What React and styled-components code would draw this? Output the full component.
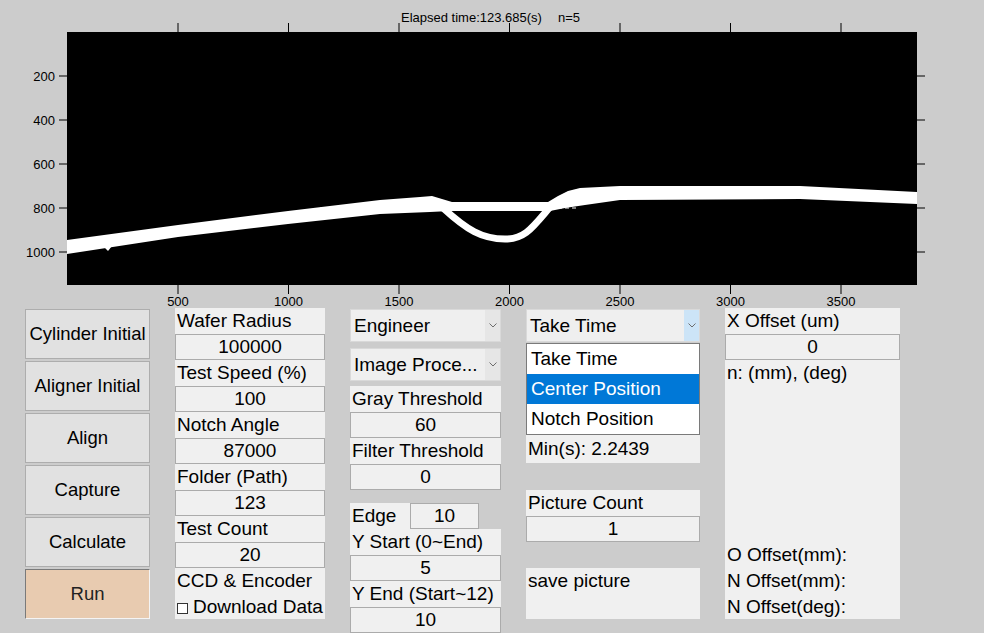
import React from 'react';
import styled, { createGlobalStyle } from 'styled-components';

const GlobalStyle = createGlobalStyle`
  html, body {
    margin: 0;
    padding: 0;
    background: #cccccc;
  }
`;

const Window = styled.div`
  width: 984px;
  height: 633px;
  background: #cccccc;
  overflow: hidden;
  display: flex;
  flex-direction: column;
  font-family: "Liberation Sans", Arial, sans-serif;
  color: #000;
`;

const PlotArea = styled.div`
  flex: none;
  height: 308px;
  overflow: hidden;

  svg {
    display: block;
  }
`;

const Controls = styled.div`
  display: flex;
  align-items: flex-start;
  gap: 25px;
  padding-left: 25px;
  height: 325px;
`;

const Column = styled.div`
  position: relative;
  display: flex;
  flex-direction: column;
  flex: none;
  width: ${p => p.$w}px;
  margin-top: ${p => p.$top || 0}px;
`;

const Button = styled.div`
  height: 50px;
  box-sizing: border-box;
  margin-bottom: 2px;
  display: flex;
  align-items: center;
  justify-content: center;
  font-size: 18.5px;
  white-space: nowrap;
  background: ${p => (p.$active ? '#e8cbb0' : '#e1e1e1')};
  border: 1px solid;
  border-color: ${p => (p.$active ? '#7a7a7a #f4f4f4 #f4f4f4 #7a7a7a' : '#adadad')};
  color: ${p => (p.$active ? '#222' : '#000')};
`;

const Label = styled.div`
  height: ${p => p.$h || 26}px;
  line-height: ${p => p.$h || 26}px;
  background: #f0f0f0;
  padding-left: 2px;
  font-size: 19px;
  white-space: nowrap;
  overflow: hidden;
  flex: none;
`;

const Edit = styled.div`
  height: 26px;
  width: ${p => (p.$w ? `${p.$w}px` : 'auto')};
  box-sizing: border-box;
  border: 1px solid #ababab;
  background: #f0f0f0;
  text-align: center;
  font-size: 19px;
  line-height: 24px;
  flex: none;
`;

const Gap = styled.div`
  flex: none;
  height: ${p => p.$h}px;
`;

const Select = styled.div`
  height: 33px;
  box-sizing: border-box;
  display: flex;
  border: 1px solid #d9d9d9;
  background: #efefef;
  flex: none;
`;

const SelectText = styled.div`
  flex: 1;
  padding-left: 3px;
  line-height: 31px;
  font-size: 19px;
  white-space: nowrap;
  overflow: hidden;
`;

const SelectArrow = styled.div`
  width: 15px;
  display: flex;
  align-items: center;
  justify-content: center;
  background: ${p => (p.$open ? '#cce4f7' : '#e6e6e6')};
`;

const Menu = styled.div`
  position: absolute;
  top: 34px;
  left: 0;
  width: 100%;
  box-sizing: border-box;
  border: 1px solid #7a7a7a;
  background: #fff;
  z-index: 2;
`;

const MenuItem = styled.div`
  height: 30px;
  line-height: 30px;
  padding-left: 4px;
  font-size: 19px;
  white-space: nowrap;
  background: ${p => (p.$selected ? '#0078d7' : 'transparent')};
  color: ${p => (p.$selected ? '#fff' : '#000')};
`;

const EdgeRow = styled.div`
  display: flex;
  height: 26px;
  flex: none;
`;

const EdgeLabel = styled(Label)`
  width: 58px;
`;

const CheckRow = styled.div`
  display: flex;
  align-items: center;
  height: 25px;
  background: #f0f0f0;
  padding-left: 2px;
  font-size: 19px;
  white-space: nowrap;
`;

const CheckBox = styled.span`
  width: 11px;
  height: 11px;
  box-sizing: border-box;
  border: 1px solid #333;
  background: #fff;
  margin: 4px 5px 0 0;
  flex: none;
`;

const NoteBox = styled.div`
  height: 51px;
  background: #f0f0f0;
  padding-left: 2px;
  font-size: 19px;
  line-height: 26px;
`;

const ResultPanel = styled.div`
  height: 311px;
  background: #f0f0f0;
  display: flex;
  flex-direction: column;

  ${Label} {
    background: transparent;
  }
`;

const Spacer = styled.div`
  flex: 1;
`;

const X_TICKS = [500, 1000, 1500, 2000, 2500, 3000, 3500];
const Y_TICKS = [200, 400, 600, 800, 1000];
const px = v => 67.5 + v * 0.221;
const py = v => 32 + v * 0.22;

const bandTop = [
  [67, 240], [178, 225], [288, 211], [380, 200], [420, 197], [432, 196], [442, 199], [452, 202],
  [548, 202], [558, 196], [568, 191], [580, 188], [620, 186], [800, 186], [917, 192],
];
const bandBottom = [
  [917, 204], [800, 199], [620, 200], [585, 205], [565, 208], [550, 211], [450, 211],
  [430, 212], [380, 214], [288, 224], [178, 237], [67, 254],
];

const Chevron = () => (
  <svg width="8" height="5" viewBox="0 0 8 5">
    <polyline points="0.5,0.5 4,4 7.5,0.5" fill="none" stroke="#6d6d6d" strokeWidth="1" />
  </svg>
);

const Plot = () => (
  <PlotArea>
    <svg width="984" height="308" viewBox="0 0 984 308" fontFamily='"Liberation Sans", Arial, sans-serif'>
      <text x="401" y="22" fontSize="13" fill="#000">Elapsed time:123.685(s)</text>
      <text x="558" y="22" fontSize="13" fill="#000">n=5</text>
      <rect x="67" y="32" width="850" height="253" fill="#000" />
      <polygon points={[...bandTop, ...bandBottom].map(p => p.join(',')).join(' ')} fill="#fff" />
      <polygon points="103,246 108,251 112,246" fill="#fff" />
      <path d="M443 208 C 467 230, 482 239, 505 239 C 525 239, 532 228, 550 207" fill="none" stroke="#fff" strokeWidth="7" />
      <line x1="320" y1="208" x2="577" y2="208" stroke="#fff" strokeWidth="1" strokeDasharray="4 3" />
      {X_TICKS.map(v => (
        <g key={v}>
          <line x1={px(v)} y1="23" x2={px(v)} y2="32" stroke="#000" />
          <line x1={px(v)} y1="285" x2={px(v)} y2="294" stroke="#000" />
          <text x={px(v)} y="306" fontSize="13" textAnchor="middle" fill="#000">{v}</text>
        </g>
      ))}
      {Y_TICKS.map(v => (
        <g key={v}>
          <line x1="59" y1={py(v)} x2="67" y2={py(v)} stroke="#000" />
          <line x1="917" y1={py(v)} x2="925" y2={py(v)} stroke="#000" />
          <text x="55" y={py(v) + 4.5} fontSize="13" textAnchor="end" fill="#000">{v}</text>
        </g>
      ))}
    </svg>
  </PlotArea>
);

const settings = [
  ['Wafer Radius', '100000'],
  ['Test Speed (%)', '100'],
  ['Notch Angle', '87000'],
  ['Folder (Path)', '123'],
  ['Test Count', '20'],
];

const buttons = ['Cylinder Initial', 'Aligner Initial', 'Align', 'Capture', 'Calculate', 'Run'];

export default function App() {
  return (
    <Window>
      <GlobalStyle />
      <Plot />
      <Controls>
        <Column $w={125} $top={1}>
          {buttons.map(b => (
            <Button key={b} $active={b === 'Run'}>{b}</Button>
          ))}
        </Column>

        <Column $w={150}>
          {settings.map(([label, value]) => (
            <React.Fragment key={label}>
              <Label>{label}</Label>
              <Edit>{value}</Edit>
            </React.Fragment>
          ))}
          <Label>CCD &amp; Encoder</Label>
          <CheckRow>
            <CheckBox />
            Download Data
          </CheckRow>
        </Column>

        <Column $w={151} $top={1}>
          <Select>
            <SelectText>Engineer</SelectText>
            <SelectArrow><Chevron /></SelectArrow>
          </Select>
          <Gap $h={6} />
          <Select>
            <SelectText>Image Proce...</SelectText>
            <SelectArrow><Chevron /></SelectArrow>
          </Select>
          <Gap $h={5} />
          <Label>Gray Threshold</Label>
          <Edit>60</Edit>
          <Label>Filter Threshold</Label>
          <Edit>0</Edit>
          <Gap $h={13} />
          <EdgeRow>
            <EdgeLabel>Edge</EdgeLabel>
            <Edit $w={69}>10</Edit>
          </EdgeRow>
          <Label>Y Start (0~End)</Label>
          <Edit>5</Edit>
          <Label>Y End (Start~12)</Label>
          <Edit>10</Edit>
        </Column>

        <Column $w={174} $top={1}>
          <Select>
            <SelectText>Take Time</SelectText>
            <SelectArrow $open><Chevron /></SelectArrow>
          </Select>
          <Menu>
            <MenuItem>Take Time</MenuItem>
            <MenuItem $selected>Center Position</MenuItem>
            <MenuItem>Notch Position</MenuItem>
          </Menu>
          <Gap $h={93} />
          <Label $h={28}>Min(s): 2.2439</Label>
          <Gap $h={27} />
          <Label>Picture Count</Label>
          <Edit>1</Edit>
          <Gap $h={26} />
          <NoteBox>save picture</NoteBox>
        </Column>

        <Column $w={175}>
          <ResultPanel>
            <Label>X Offset (um)</Label>
            <Edit>0</Edit>
            <Label>n: (mm), (deg)</Label>
            <Spacer />
            <Label>O Offset(mm):</Label>
            <Label>N Offset(mm):</Label>
            <Label $h={25}>N Offset(deg):</Label>
          </ResultPanel>
        </Column>
      </Controls>
    </Window>
  );
}
